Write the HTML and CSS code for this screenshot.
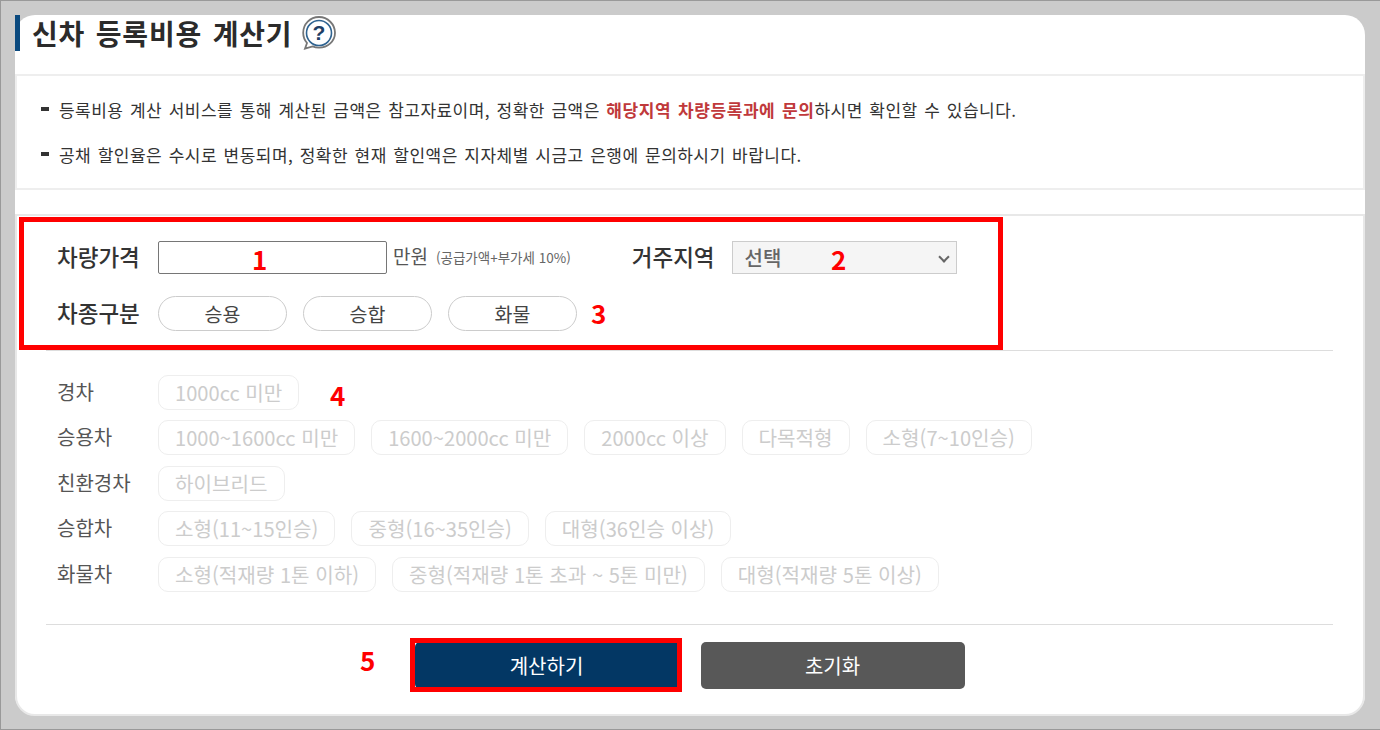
FILE: index.html
```html
<!DOCTYPE html>
<html lang="ko">

<head>
  <meta charset="UTF-8">
  <title>신차 등록비용 계산기</title>
  <link rel="stylesheet" href="styles.css">
</head>

<body>
  <div class="frame">
    <div class="card">
      <div class="title-row">
        <h1 class="title">신차 등록비용 계산기</h1>
        <svg class="help-icon" width="34" height="34" viewBox="0 0 34 34">
          <path d="M17 1C8 1 1.200 8 1.200 16.800c0 4 1.400 7.500 3.800 10.200L3 32.600l7.600-2.200c2 .9 4.100 1.300 6.400 1.300 8.800 0 16-6.500 16-14.900S25.800 1 17 1z" fill="#fff" stroke="#777" stroke-width="1.800" />
          <circle cx="17" cy="17" r="12.500" fill="#fff" stroke="#2f6390" stroke-width="1.600" />
          <text x="17" y="24" class="help-mark">?</text>
        </svg>
      </div>

      <div class="notes">
        <p class="note">등록비용 계산 서비스를 통해 계산된 금액은 참고자료이며, 정확한 금액은 <strong>해당지역 차량등록과에 문의</strong>하시면 확인할 수 있습니다.</p>
        <p class="note">공채 할인율은 수시로 변동되며, 정확한 현재 할인액은 지자체별 시금고 은행에 문의하시기 바랍니다.</p>
      </div>

      <div class="calc">
        <div class="form-row form-row-price">
          <label class="form-label">차량가격</label>
          <input class="price-input" type="text">
          <span class="unit">만원</span>
          <span class="unit-note">(공급가액+부가세 10%)</span>
          <label class="form-label region-label">거주지역</label>
          <div class="select-wrap">
            <select class="region-select">
              <option>선택</option>
            </select>
          </div>
        </div>
        <div class="form-row form-row-kind">
          <label class="form-label">차종구분</label>
          <button class="pill">승용</button>
          <button class="pill">승합</button>
          <button class="pill">화물</button>
        </div>

        <div class="types">
          <div class="type-row">
            <span class="type-label">경차</span>
            <span class="chip">1000cc 미만</span>
          </div>
          <div class="type-row">
            <span class="type-label">승용차</span>
            <span class="chip">1000~1600cc 미만</span>
            <span class="chip">1600~2000cc 미만</span>
            <span class="chip">2000cc 이상</span>
            <span class="chip">다목적형</span>
            <span class="chip">소형(7~10인승)</span>
          </div>
          <div class="type-row">
            <span class="type-label">친환경차</span>
            <span class="chip">하이브리드</span>
          </div>
          <div class="type-row">
            <span class="type-label">승합차</span>
            <span class="chip">소형(11~15인승)</span>
            <span class="chip">중형(16~35인승)</span>
            <span class="chip">대형(36인승 이상)</span>
          </div>
          <div class="type-row">
            <span class="type-label">화물차</span>
            <span class="chip">소형(적재량 1톤 이하)</span>
            <span class="chip">중형(적재량 1톤 초과 ~ 5톤 미만)</span>
            <span class="chip">대형(적재량 5톤 이상)</span>
          </div>
        </div>

        <div class="actions">
          <button class="btn btn-primary">계산하기</button>
          <button class="btn btn-secondary">초기화</button>
        </div>
      </div>
    </div>

    <!-- 설명용 표시 -->
    <div class="mark-box mark-box-form"></div>
    <div class="mark-box mark-box-btn"></div>
    <span class="mark-num mark-1">1</span>
    <span class="mark-num mark-2">2</span>
    <span class="mark-num mark-3">3</span>
    <span class="mark-num mark-4">4</span>
    <span class="mark-num mark-5">5</span>
  </div>
</body>

</html>
```

FILE: styles.css
```css
* {
  margin: 0;
  padding: 0;
  box-sizing: border-box;
}

body {
  font-family: "Noto Sans CJK KR", "Noto Sans", sans-serif;
  color: #333;
  background-color: #ccc;
  overflow: hidden;
}

.frame {
  position: relative;
  width: 1380px;
  height: 730px;
  padding: 14px 15px 14px 14px;
  background-color: #cbcbcb;
  border: 1px solid #999;
  border-right: none;
}

.card {
  height: 700px;
  background-color: #fff;
  border-radius: 20px;
}

.title-row {
  display: flex;
  align-items: center;
  height: 36px;
  padding-left: 12px;
  border-left: 5px solid #0b4a7f;
}

.title {
  font-size: 28px;
  font-weight: 700;
  line-height: 36px;
  letter-spacing: 0.8px;
  word-spacing: 2px;
  color: #2b2b2b;
}

.help-icon {
  margin-left: 10px;
}

.help-mark {
  font-family: "Liberation Sans", sans-serif;
  font-size: 21px;
  font-weight: 700;
  text-anchor: middle;
  fill: #1f3f66;
}

.notes {
  height: 116px;
  margin-top: 23px;
  padding: 23px 0 0 24px;
  border: 2px solid #eee;
}

.note {
  position: relative;
  padding-left: 18px;
  margin-bottom: 23px;
  font-size: 17px;
  line-height: 22px;
  letter-spacing: 0.47px;
  word-spacing: 1.300px;
  color: #333;
  white-space: nowrap;
}

.note:before {
  position: absolute;
  content: "";
  left: 0;
  top: 8px;
  width: 8px;
  height: 4px;
  background-color: #333;
}

.note strong {
  color: #c0393b;
  font-weight: 700;
  letter-spacing: 0.6px;
}

.calc {
  height: 502px;
  margin-top: 24px;
  padding: 25px 30px 0 29px;
  border: 2px solid #e8e8e8;
  border-radius: 0 0 20px 20px;
}

.form-row {
  display: flex;
  align-items: center;
}

.form-row-price {
  height: 33px;
}

.form-row-kind {
  height: 35px;
  margin-top: 22px;
}

.form-label {
  width: 112px;
  padding: 0 0 3px 11px;
  font-size: 22.500px;
  font-weight: 500;
  color: #333;
  white-space: nowrap;
}

.price-input {
  width: 229px;
  height: 33px;
  border: 1px solid #767676;
  border-radius: 2px;
  background-color: #fff;
}

.unit {
  margin-left: 6px;
  padding-bottom: 5px;
  font-size: 19px;
  color: #555;
}

.unit-note {
  margin-left: 8px;
  padding-bottom: 2px;
  font-size: 13.500px;
  color: #666;
  white-space: nowrap;
}

.region-label {
  width: auto;
  padding-left: 0;
  margin-left: 61px;
}

.select-wrap {
  position: relative;
  margin-left: 17px;
}

/* 화살표 */
.select-wrap:after {
  position: absolute;
  content: "";
  right: 9px;
  top: 12px;
  width: 6px;
  height: 6px;
  border-right: 2px solid #666;
  border-bottom: 2px solid #666;
  transform: rotate(45deg);
}

.region-select {
  display: block;
  width: 225px;
  height: 33px;
  padding-left: 12px;
  border: 1px solid #ccc;
  border-radius: 0;
  background-color: #f5f5f5;
  appearance: none;
  font-family: inherit;
  font-size: 20px;
  font-weight: 500;
  color: #666;
}

.pill {
  width: 129px;
  height: 35px;
  margin-right: 16px;
  border: 1px solid #ccc;
  border-radius: 18px;
  background-color: #fff;
  font-family: inherit;
  font-size: 19.500px;
  line-height: 1;
  color: #444;
}

.types {
  margin-top: 19px;
  padding-top: 23px;
  border-top: 1px solid #ddd;
}

.type-row {
  display: flex;
  align-items: center;
  height: 36px;
  margin-bottom: 9.500px;
}

.type-label {
  width: 112px;
  padding: 0 0 2px 11px;
  font-size: 20px;
  color: #555;
  white-space: nowrap;
}

.chip {
  display: flex;
  align-items: center;
  height: 35px;
  padding: 0 16px;
  margin-right: 16px;
  border: 1px solid #eee;
  border-radius: 10px;
  font-size: 20.120px;
  color: #ccc;
  white-space: nowrap;
}

.actions {
  display: flex;
  justify-content: center;
  gap: 22px;
  margin-top: 32px;
  padding-top: 17px;
  border-top: 1px solid #ddd;
}

.btn {
  width: 264px;
  height: 47px;
  border: none;
  border-radius: 5px;
  font-family: inherit;
  font-size: 20px;
  color: #fff;
}

.btn-primary {
  background-color: #033764;
}

.btn-secondary {
  background-color: #585858;
}

.mark-box {
  position: absolute;
  border: 5px solid #f00;
}

.mark-box-form {
  left: 18px;
  top: 216px;
  width: 984px;
  height: 133px;
}

.mark-box-btn {
  left: 409px;
  top: 637px;
  width: 272px;
  height: 54px;
}

.mark-num {
  position: absolute;
  font-size: 26px;
  font-weight: 700;
  line-height: 32px;
  color: #f00;
}

.mark-1 {
  left: 251px;
  top: 242px;
}

.mark-2 {
  left: 830px;
  top: 242px;
}

.mark-3 {
  left: 590px;
  top: 296px;
}

.mark-4 {
  left: 329px;
  top: 378px;
}

.mark-5 {
  left: 359px;
  top: 643px;
}
```
